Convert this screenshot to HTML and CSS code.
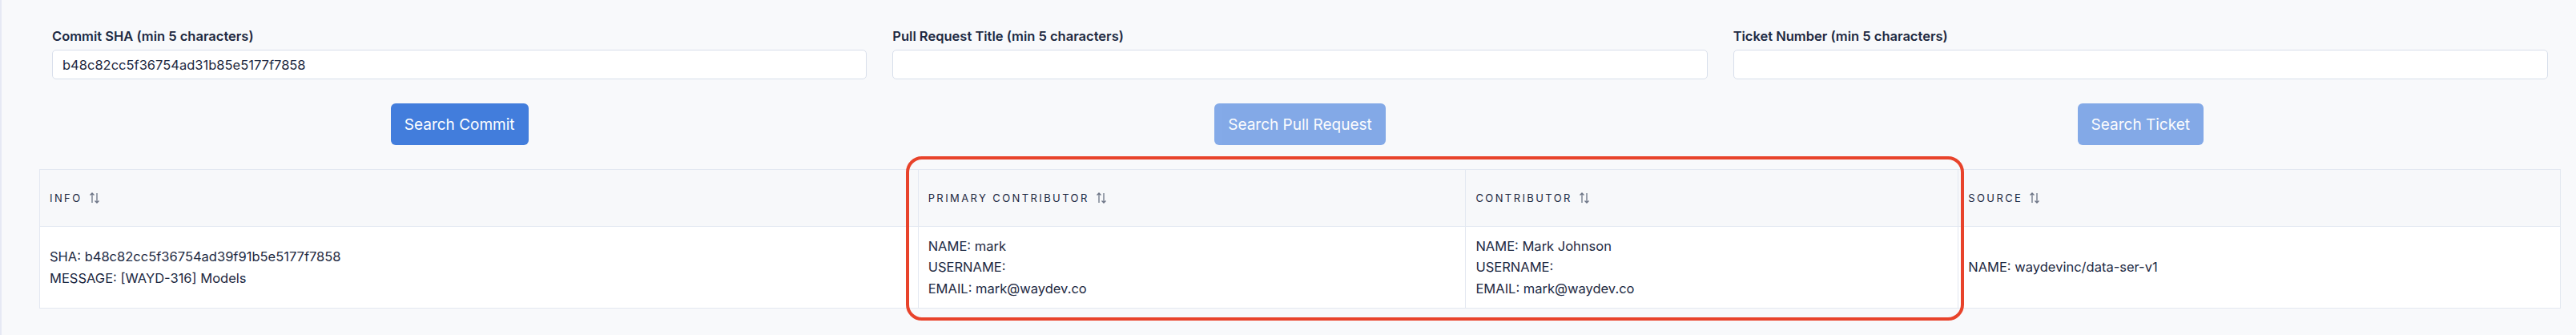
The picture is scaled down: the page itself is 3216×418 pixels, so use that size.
FILE: index.html
```html
<!DOCTYPE html>
<html lang="en">
<head>
  <meta charset="UTF-8" />
  <title>Search</title>
  <link rel="stylesheet" href="styles.css">
</head>
<body>
  <div class="page">
    <div class="search-grid">
      <div class="search-col">
        <label class="field-label" for="sha">Commit SHA (min 5 characters)</label>
        <input class="field-input" id="sha" type="text" value="b48c82cc5f36754ad31b85e5177f7858" />
        <div class="actions">
          <button class="btn">Search Commit</button>
        </div>
      </div>
      <div class="search-col">
        <label class="field-label" for="pr">Pull Request Title (min 5 characters)</label>
        <input class="field-input" id="pr" type="text" />
        <div class="actions">
          <button class="btn" disabled>Search Pull Request</button>
        </div>
      </div>
      <div class="search-col">
        <label class="field-label" for="ticket">Ticket Number (min 5 characters)</label>
        <input class="field-input" id="ticket" type="text" />
        <div class="actions">
          <button class="btn" disabled>Search Ticket</button>
        </div>
      </div>
    </div>

    <table class="results">
      <thead>
        <tr>
          <th class="col-info">Info <svg class="sort-icon" viewBox="0 0 14 16"><path d="M4 14V2M1.5 4.5L4 2l2.5 2.5M10 2v12M7.5 11.5L10 14l2.5-2.5"/></svg></th>
          <th class="col-primary">Primary Contributor <svg class="sort-icon" viewBox="0 0 14 16"><path d="M4 14V2M1.5 4.5L4 2l2.5 2.5M10 2v12M7.5 11.5L10 14l2.5-2.5"/></svg></th>
          <th class="col-contrib">Contributor <svg class="sort-icon" viewBox="0 0 14 16"><path d="M4 14V2M1.5 4.5L4 2l2.5 2.5M10 2v12M7.5 11.5L10 14l2.5-2.5"/></svg></th>
          <th class="col-source">Source <svg class="sort-icon" viewBox="0 0 14 16"><path d="M4 14V2M1.5 4.5L4 2l2.5 2.5M10 2v12M7.5 11.5L10 14l2.5-2.5"/></svg></th>
        </tr>
      </thead>
      <tbody>
        <tr>
          <td>SHA: b48c82cc5f36754ad39f91b5e5177f7858<br>MESSAGE: [WAYD-316] Models</td>
          <td>NAME: mark<br>USERNAME:<br>EMAIL: mark@waydev.co</td>
          <td>NAME: Mark Johnson<br>USERNAME:<br>EMAIL: mark@waydev.co</td>
          <td>NAME: waydevinc/data-ser-v1</td>
        </tr>
      </tbody>
    </table>
  </div>

  <div class="highlight"></div>
</body>
</html>
```

FILE: styles.css
```css
body {
  margin: 0;
  background: #f8f9fb;
  color: #1d2942;
  font-family: Inter, "Noto Sans", sans-serif;
}

.page {
  min-height: 418px;
  box-sizing: border-box;
  border-left: 2px solid #e6e9f4;
  padding: 35px 19px 0 47px;
}

.search-grid {
  display: grid;
  grid-template-columns: repeat(3, 1fr);
}

.search-col {
  padding: 0 16px;
}

.field-label {
  display: block;
  font-size: 16.5px;
  font-weight: 600;
  line-height: 20px;
  margin-bottom: 7px;
}

.field-input {
  display: block;
  width: 100%;
  height: 37px;
  box-sizing: border-box;
  border: 1px solid #d8dfeb;
  border-radius: 5px;
  background: #fff;
  padding: 0 12px;
  font-family: inherit;
  font-size: 16.5px;
  color: #1d2942;
}

.actions {
  margin-top: 30px;
  text-align: center;
}

.btn {
  height: 52px;
  padding: 0 17px;
  border: none;
  border-radius: 6px;
  background: #427ddc;
  color: #fff;
  font-family: inherit;
  font-size: 19px;
  cursor: pointer;
}

.btn:disabled {
  opacity: 0.64;
  cursor: default;
}

.results {
  width: 100%;
  margin-top: 30px;
  border-collapse: collapse;
  border: 1px solid #e3e8f1;
}

.results th,
.results td {
  border: 1px solid #e3e8f1;
  text-align: left;
  padding: 0 12px;
}

.results th {
  height: 71px;
  box-sizing: border-box;
  background: #f7f8fa;
  font-size: 13px;
  font-weight: 400;
  letter-spacing: 2.4px;
  text-transform: uppercase;
}

.results td {
  height: 101px;
  background: #fff;
  font-size: 16.5px;
  line-height: 26.5px;
  vertical-align: middle;
}

.col-info { width: 1097px; }
.col-primary { width: 684px; }
.col-contrib { width: 615px; }
.col-source { width: 752px; }

.sort-icon {
  width: 14px;
  height: 16px;
  margin-left: 2px;
  vertical-align: -3px;
  fill: none;
  stroke: #6b7385;
  stroke-width: 1.3;
}

/* annotation frame drawn over the contributor columns */
.highlight {
  position: absolute;
  left: 1131px;
  top: 195px;
  width: 1321px;
  height: 205px;
  box-sizing: border-box;
  border: 4px solid #e8432b;
  border-radius: 20px;
  pointer-events: none;
}
```
